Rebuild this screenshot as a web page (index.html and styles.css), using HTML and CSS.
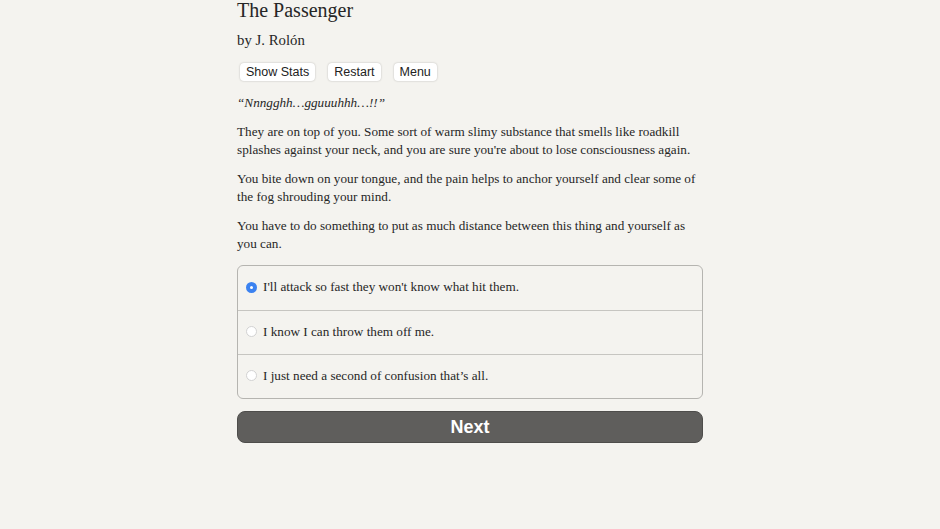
FILE: index.html
```html
<!DOCTYPE html>
<html>
<head>
<meta charset="utf-8">
<title>The Passenger</title>
<link rel="stylesheet" href="styles.css">
</head>
<body>
<div class="container">
  <h1 class="title">The Passenger</h1>
  <h2 class="author">by J. Rolón</h2>
  <div class="buttons">
    <button class="btn">Show Stats</button>
    <button class="btn">Restart</button>
    <button class="btn">Menu</button>
  </div>
  <div class="text">
    <p><i>“Nnngghh…gguuuhhh…!!”</i></p>
    <p>They are on top of you. Some sort of warm slimy substance that smells like roadkill splashes against your neck, and you are sure you're about to lose consciousness again.</p>
    <p>You bite down on your tongue, and the pain helps to anchor yourself and clear some of the fog shrouding your mind.</p>
    <p>You have to do something to put as much distance between this thing and yourself as you can.</p>
  </div>
  <div class="choices">
    <label class="choice"><span class="radio checked"></span>I'll attack so fast they won't know what hit them.</label>
    <label class="choice"><span class="radio"></span>I know I can throw them off me.</label>
    <label class="choice"><span class="radio"></span>I just need a second of confusion that’s all.</label>
  </div>
  <button class="next">Next</button>
</div>
</body>
</html>
```
FILE: styles.css
```css
html, body {
  margin: 0;
  padding: 0;
  background: #f4f3ef;
}
body {
  font-family: "Liberation Serif", "Times New Roman", serif;
  color: #262626;
}
.container {
  width: 466px;
  margin: 0 auto;
}
.title {
  font-size: 20px;
  font-weight: normal;
  margin: 0;
  line-height: 20px;
}
.author {
  font-size: 14.8px;
  font-weight: normal;
  margin: 10px 0 0 0;
  line-height: 20px;
}
.buttons {
  display: flex;
  gap: 13px;
  margin: 13px 0 0 3px;
}
.btn {
  font-family: "Liberation Sans", Arial, sans-serif;
  font-size: 12.5px;
  color: #222;
  background: #fff;
  border: none;
  border-radius: 4px;
  box-shadow: 0 0 2px rgba(0,0,0,0.25);
  height: 18px;
  padding: 0 6px;
  line-height: 18px;
}
.text {
  font-size: 13.2px;
  line-height: 17.7px;
  margin-top: 13px;
}
.text p {
  margin: 0 0 11.5px 0;
}
.choices {
  margin-top: 13px;
  border: 1px solid #b5b4b0;
  border-radius: 6px;
  display: flex;
  flex-direction: column;
}
.choice {
  box-sizing: border-box;
  display: flex;
  align-items: center;
  height: 44px;
  padding: 0 0 2px 8px;
  font-size: 13.2px;
  border-top: 1px solid #c6c5c1;
}
.choice:first-child {
  border-top: none;
}
.radio {
  width: 9px;
  height: 9px;
  border-radius: 50%;
  background: #fff;
  border: 1px solid #d2d2d2;
  margin-right: 6px;
  box-sizing: content-box;
}
.radio.checked {
  width: 3px;
  height: 3px;
  border: 4px solid #3b82f0;
}
.next {
  display: block;
  width: 100%;
  margin-top: 12px;
  height: 32px;
  border: 1px solid #4e4d4b;
  border-radius: 8px;
  background: #5f5e5c;
  color: #fff;
  font-family: "Liberation Sans", Arial, sans-serif;
  font-weight: bold;
  font-size: 18px;
}
```
